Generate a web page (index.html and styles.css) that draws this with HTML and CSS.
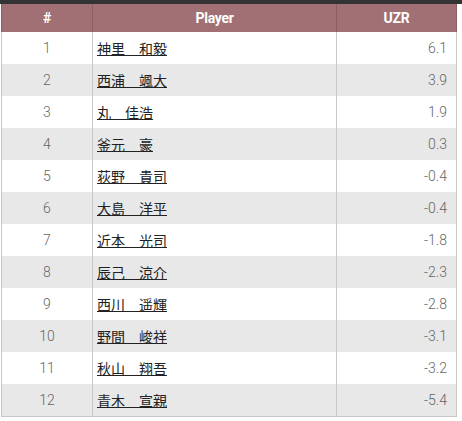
FILE: index.html
```html
<!DOCTYPE html>
<html lang="ja">
<head>
<meta charset="utf-8">
<link rel="stylesheet" href="styles.css">
</head>
<body>
<div class="topbar"></div>
<table class="rank">
<thead>
<tr><th class="c-no">#</th><th class="c-name">Player</th><th class="c-val">UZR</th></tr>
</thead>
<tbody>
<tr><td class="c-no">1</td><td class="c-name"><a>神里　和毅</a></td><td class="c-val">6.1</td></tr>
<tr><td class="c-no">2</td><td class="c-name"><a>西浦　颯大</a></td><td class="c-val">3.9</td></tr>
<tr><td class="c-no">3</td><td class="c-name"><a>丸　佳浩</a></td><td class="c-val">1.9</td></tr>
<tr><td class="c-no">4</td><td class="c-name"><a>釜元　豪</a></td><td class="c-val">0.3</td></tr>
<tr><td class="c-no">5</td><td class="c-name"><a>荻野　貴司</a></td><td class="c-val">-0.4</td></tr>
<tr><td class="c-no">6</td><td class="c-name"><a>大島　洋平</a></td><td class="c-val">-0.4</td></tr>
<tr><td class="c-no">7</td><td class="c-name"><a>近本　光司</a></td><td class="c-val">-1.8</td></tr>
<tr><td class="c-no">8</td><td class="c-name"><a>辰己　涼介</a></td><td class="c-val">-2.3</td></tr>
<tr><td class="c-no">9</td><td class="c-name"><a>西川　遥輝</a></td><td class="c-val">-2.8</td></tr>
<tr><td class="c-no">10</td><td class="c-name"><a>野間　峻祥</a></td><td class="c-val">-3.1</td></tr>
<tr><td class="c-no">11</td><td class="c-name"><a>秋山　翔吾</a></td><td class="c-val">-3.2</td></tr>
<tr><td class="c-no">12</td><td class="c-name"><a>青木　宣親</a></td><td class="c-val">-5.4</td></tr>
</tbody>
</table>
</body>
</html>
```
FILE: styles.css
```css
html, body {
  margin: 0;
  padding: 0;
  background: #fff;
}
.topbar {
  height: 4px;
  background: #333;
}
.rank {
  border-collapse: collapse;
  width: 456px;
  margin-left: 1px;
  font-family: Roboto, "Noto Sans CJK JP", sans-serif;
}
.rank th {
  background: #a07074;
  color: #fff;
  height: 28px;
  padding: 0;
  font-family: Roboto, sans-serif;
  font-weight: bold;
  font-size: 14px;
  letter-spacing: -0.3px;
  border-left: 1px solid #8a6064;
  border-right: 1px solid #8a6064;
  text-align: center;
}
.rank td {
  height: 32px;
  padding: 0;
  border: 1px solid #c8c8c8;
  border-top: none;
  border-bottom: none;
  font-size: 14px;
  color: #666;
  font-weight: 300;
}
.rank tbody tr:nth-child(even) td {
  background: #e8e8e8;
}
.rank tbody tr:last-child td {
  border-bottom: 1px solid #c8c8c8;
}
.rank .c-no {
  width: 90px;
  text-align: center;
}
.rank .c-name {
  width: 239px;
  text-align: left;
  padding-left: 4px;
}
.rank th.c-name {
  width: 243px;
  text-align: center;
  padding-left: 0;
}
.rank .c-val {
  text-align: right;
  padding-right: 9px;
}
.rank th.c-val {
  text-align: center;
  padding-right: 0;
}
.rank a {
  color: #222;
  font-family: "Noto Sans CJK JP", sans-serif;
  font-weight: 400;
  text-decoration: underline;
  font-size: 14px;
}
```
